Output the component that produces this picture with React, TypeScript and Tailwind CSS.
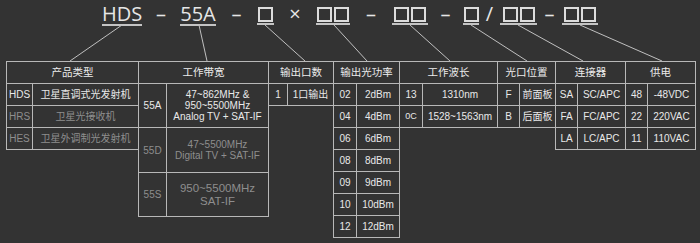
import React from 'react';

type Row = { code: React.ReactNode; desc: React.ReactNode; h: string; dim?: boolean; descClass?: string };

type Group = { title: string; w: string; codeW: string; first?: boolean; rows: Row[] };

const groups: Group[] = [
    {
        title: '产品类型', w: 'w-[133px]', codeW: 'w-[26px]', first: true,
        rows: [
            {code: 'HDS', desc: '卫星直调式光发射机', h: 'h-[22px]'},
            {code: 'HRS', desc: '卫星光接收机', h: 'h-[22px]', dim: true},
            {code: 'HES', desc: '卫星外调制光发射机', h: 'h-[22px]', dim: true},
        ],
    },
    {
        title: '工作带宽', w: 'w-[131px]', codeW: 'w-[28px]',
        rows: [
            {code: '55A', desc: <>47~862MHz &amp;<br/>950~5500MHz<br/>Analog TV + SAT-IF</>, h: 'h-[44px]', descClass: 'leading-[11px]'},
            {code: '55D', desc: <>47~5500MHz<br/>Digital TV + SAT-IF</>, h: 'h-[45px]', dim: true, descClass: 'leading-[11px]'},
            {code: '55S', desc: <>950~5500MHz<br/>SAT-IF</>, h: 'h-[44px]', dim: true, descClass: 'text-[11.5px] leading-[13px]'},
        ],
    },
    {
        title: '输出口数', w: 'w-[66px]', codeW: 'w-[19px]',
        rows: [{code: '1', desc: '1口输出', h: 'h-[22px]'}],
    },
    {
        title: '输出光功率', w: 'w-[67px]', codeW: 'w-[23px]',
        rows: [
            {code: '02', desc: '2dBm', h: 'h-[22px]'},
            {code: '04', desc: '4dBm', h: 'h-[22px]'},
            {code: '06', desc: '6dBm', h: 'h-[22px]'},
            {code: '08', desc: '8dBm', h: 'h-[22px]'},
            {code: '09', desc: '9dBm', h: 'h-[22px]'},
            {code: '10', desc: '10dBm', h: 'h-[22px]'},
            {code: '12', desc: '12dBm', h: 'h-[22px]'},
        ],
    },
    {
        title: '工作波长', w: 'w-[99px]', codeW: 'w-[23px]',
        rows: [
            {code: '13', desc: '1310nm', h: 'h-[22px]'},
            {code: <span className="text-[9px]">0C</span>, desc: '1528~1563nm', h: 'h-[22px]'},
        ],
    },
    {
        title: '光口位置', w: 'w-[59px]', codeW: 'w-[22px]',
        rows: [
            {code: 'F', desc: '前面板', h: 'h-[22px]'},
            {code: 'B', desc: '后面板', h: 'h-[22px]'},
        ],
    },
    {
        title: '连接器', w: 'w-[71px]', codeW: 'w-[22px]',
        rows: [
            {code: 'SA', desc: 'SC/APC', h: 'h-[22px]'},
            {code: 'FA', desc: 'FC/APC', h: 'h-[22px]'},
            {code: 'LA', desc: 'LC/APC', h: 'h-[22px]'},
        ],
    },
    {
        title: '供电', w: 'w-[71px]', codeW: 'w-[22px]',
        rows: [
            {code: '48', desc: '-48VDC', h: 'h-[22px]'},
            {code: '22', desc: '220VAC', h: 'h-[22px]'},
            {code: '11', desc: '110VAC', h: 'h-[22px]'},
        ],
    },
];

function Box() {
    return <span className="block w-[15px] h-[15px] border-2 border-[#dcdcdc]"></span>;
}

type Token = { w: string; under?: boolean; content: React.ReactNode; box?: boolean };

const tokens: Token[] = [
    {w: 'w-[40px]', under: true, content: 'HDS'},
    {w: 'w-[38px]', content: '–'},
    {w: 'w-[36px]', under: true, content: '55A'},
    {w: 'w-[41px]', content: '–'},
    {w: 'w-[17px]', under: true, box: true, content: <Box/>},
    {w: 'w-[42px]', content: '×'},
    {w: 'w-[34px]', under: true, box: true, content: <><Box/><Box/></>},
    {w: 'w-[42px]', content: '–'},
    {w: 'w-[36px]', under: true, box: true, content: <><Box/><Box/></>},
    {w: 'w-[35px]', content: '–'},
    {w: 'w-[16px]', under: true, box: true, content: <Box/>},
    {w: 'w-[21px]', content: '/'},
    {w: 'w-[37px]', under: true, box: true, content: <><Box/><Box/></>},
    {w: 'w-[25px]', content: '–'},
    {w: 'w-[36px]', under: true, box: true, content: <><Box/><Box/></>},
];

const links = [
    [122, 70], [199, 207], [265, 305], [334, 367], [410, 450], [471, 527], [518, 583], [580, 662],
];

export default function App() {
    return (
        <div className="w-[700px] h-[243px] bg-[#333333] overflow-hidden font-['Liberation_Sans','Noto_Sans_CJK_SC',sans-serif] text-[10px] text-[#e9e9e9]">
            <div className="relative h-[61px]">
                <div className="flex pl-[102px] font-['Open_Sans','Noto_Sans_CJK_SC',sans-serif] text-[20px] text-[#e6e6e6]">
                    {tokens.map((t, i) => (
                        <div key={i} className={`${t.w} flex flex-col items-center`}>
                            {t.box ? (
                                <div className="h-[28px] flex items-end justify-center gap-[2px] pb-[6px]">{t.content}</div>
                            ) : (
                                <div className="leading-[28px] pb-[1px]">{t.content}</div>
                            )}
                            {t.under && <div className="-mt-[5px] w-full h-[2px] bg-[#c4c4c4]"></div>}
                        </div>
                    ))}
                </div>
                <svg className="absolute inset-0 pointer-events-none" width="700" height="61">
                    {links.map(([a, b], i) => (
                        <line key={i} x1={a} y1={25} x2={b} y2={61} stroke="#c0c0c0" strokeWidth="1"/>
                    ))}
                </svg>
            </div>
            <div className="flex items-start pl-[6px]">
                {groups.map((g, gi) => (
                    <div key={gi} className={`${g.w} ${g.first ? '' : '-ml-px'} flex flex-col border-l border-t border-[#b8b8b8]`}>
                        <div className="h-[22px] flex items-center justify-center border-r border-b border-[#b8b8b8] text-[10.5px] text-[#ececec]">
                            {g.title}
                        </div>
                        {g.rows.map((r, ri) => (
                            <div key={ri} className={`${r.h} flex ${r.dim ? 'text-[#8e8e8e]' : ''}`}>
                                <div className={`${g.codeW} shrink-0 flex items-center justify-center border-r border-b border-[#b8b8b8]`}>
                                    {r.code}
                                </div>
                                <div className={`flex-1 flex items-center justify-center text-center border-r border-b border-[#b8b8b8] ${r.descClass ?? ''}`}>
                                    <div>{r.desc}</div>
                                </div>
                            </div>
                        ))}
                    </div>
                ))}
            </div>
        </div>
    );
}
